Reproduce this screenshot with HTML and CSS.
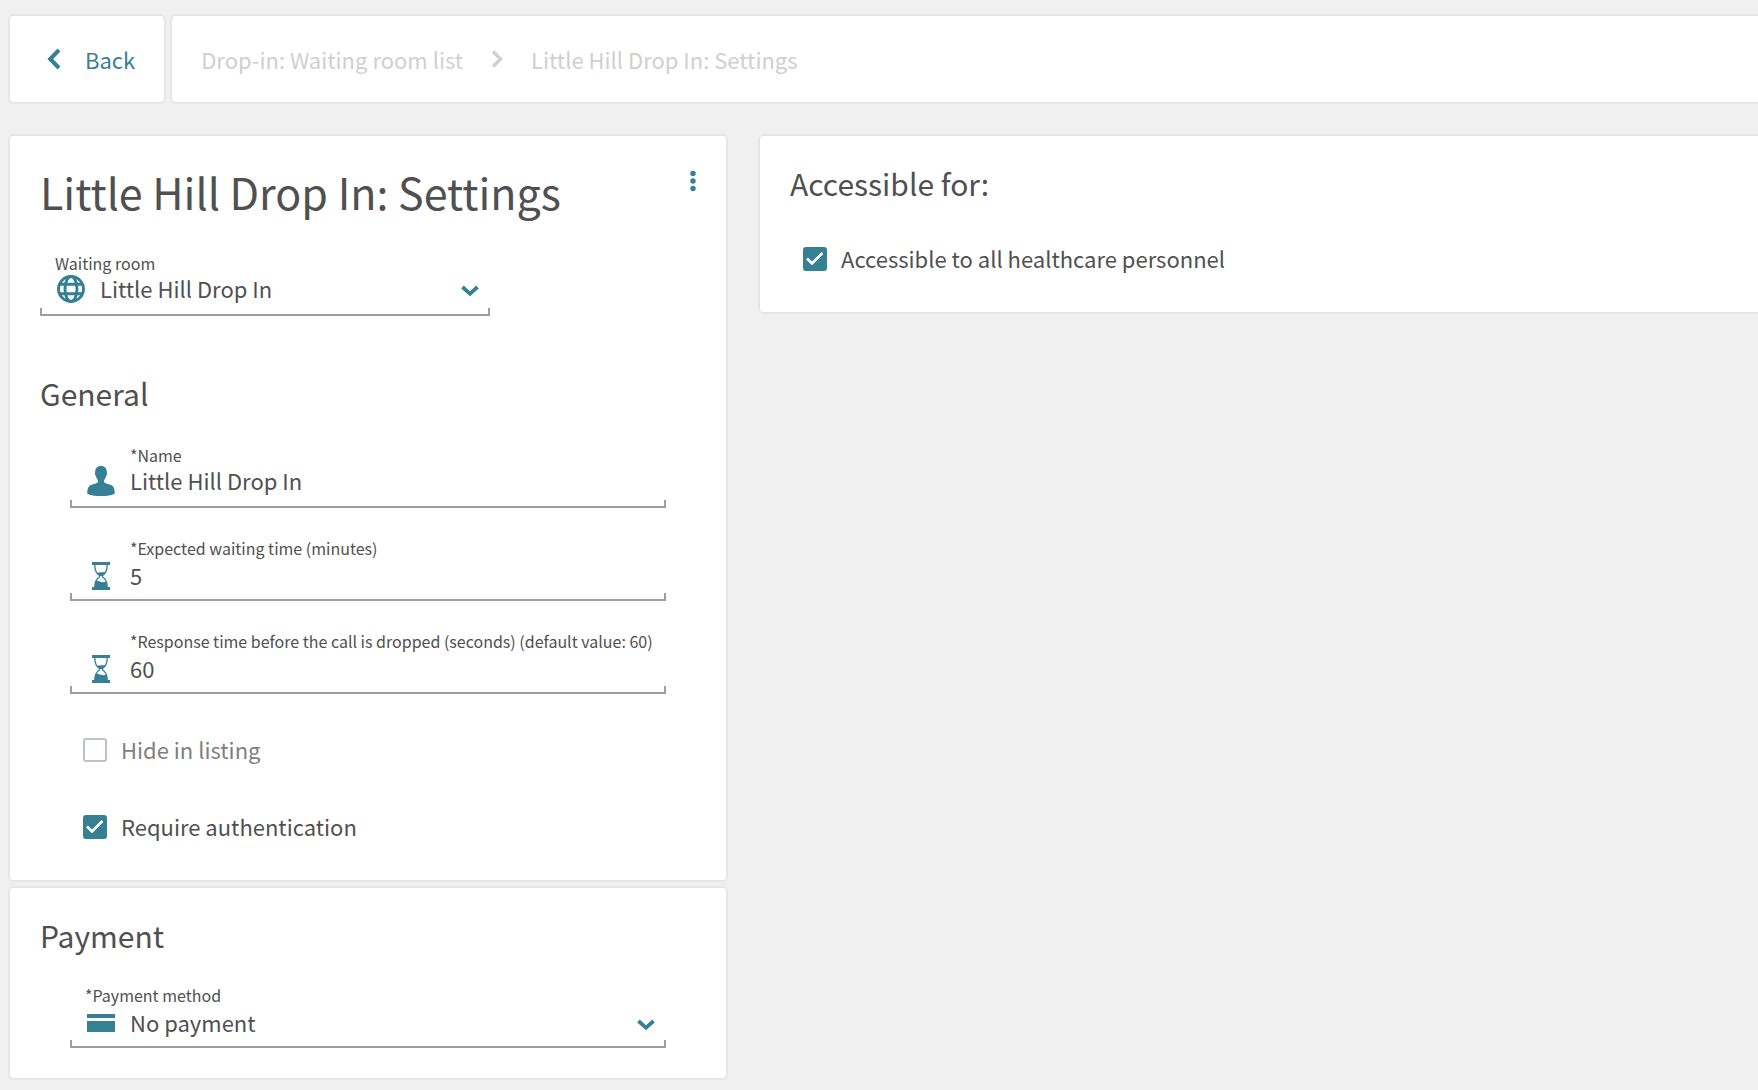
FILE: index.html
```html
<!DOCTYPE html>
<html lang="en">
<head>
  <meta charset="utf-8">
  <meta name="viewport" content="width=device-width, initial-scale=1">
  <title>Little Hill Drop In: Settings</title>
  <link rel="stylesheet" href="styles.css">
</head>
<body>
  <svg class="sprite" aria-hidden="true">
    <symbol id="chevron-down" viewBox="0 0 18 12">
      <path d="M1.5 2 9 8.800 16.500 2" fill="none" stroke="currentColor" stroke-width="3.800"/>
    </symbol>
    <symbol id="hourglass" viewBox="0 0 28 28">
      <path d="M5 0h18v3H5zM5 25h18v3H5z" fill="currentColor"/>
      <path d="M7.800 3c0 5.500 1.500 8.500 4.700 10.500v1.500C9.300 17 7.800 20 7.800 25M20.200 3c0 5.500-1.500 8.500-4.700 10.500v1.500c3.200 2 4.700 5 4.700 10" fill="none" stroke="currentColor" stroke-width="1.300"/>
      <path d="M9.500 10.800c1.500.5 3-.8 4.800-.6 1.500.2 2.700.2 4.300-.4-.8 1.800-2 3.200-3.400 4.200h-2.400c-1.400-.8-2.500-1.800-3.300-3.200zM8 25c0-2.500.2-4.300.8-6 1.800-.8 3.400.2 5 .8 2 .7 3.600.4 5.400 0 .6 1.500.8 3 .8 5.200z" fill="currentColor"/>
    </symbol>
  </svg>

  <header class="topbar">
    <button class="back" type="button">
      <svg class="back__icon" viewBox="0 0 14 22" aria-hidden="true"><path d="M12 2 3.200 11 12 20" fill="none" stroke="currentColor" stroke-width="4"/></svg>
      <span>Back</span>
    </button>
    <nav class="breadcrumbs" aria-label="Breadcrumb">
      <a href="#list">Drop-in: Waiting room list</a>
      <svg class="breadcrumbs__icon" viewBox="0 0 12 18" aria-hidden="true"><path d="M2 1.500 9.500 9 2 16.500" fill="none" stroke="currentColor" stroke-width="3.400"/></svg>
      <a href="#settings" aria-current="page">Little Hill Drop In: Settings</a>
    </nav>
  </header>

  <main class="layout">
    <form class="column">
      <section class="card card--options">
        <div class="card__header">
          <h1>Little Hill Drop In: Settings</h1>
          <button class="menu" type="button" aria-label="More options">
            <svg class="menu__icon" viewBox="0 0 6 22" aria-hidden="true" fill="currentColor"><circle cx="3" cy="3.500" r="2.700"/><circle cx="3" cy="11" r="2.700"/><circle cx="3" cy="18.500" r="2.700"/></svg>
          </button>
        </div>

        <div class="field field--room">
          <label class="field__label" for="room">Waiting room</label>
          <div class="field__row">
            <svg class="field__icon" viewBox="0 0 28 28" aria-hidden="true" fill="none" stroke="currentColor" stroke-width="2.900"><circle cx="14" cy="14" r="12.500"/><ellipse cx="14" cy="14" rx="6" ry="12.500"/><path d="M2.500 9.200h23M2.500 18.800h23"/></svg>
            <select class="field__control" id="room"><option>Little Hill Drop In</option></select>
            <svg class="field__chevron" aria-hidden="true"><use href="#chevron-down"/></svg>
          </div>
        </div>

        <h2 class="general-title">General</h2>
        <div class="fields">
          <div class="field field--inset">
            <label class="field__label" for="name">*Name</label>
            <div class="field__row">
              <svg class="field__icon" viewBox="0 0 28 30" aria-hidden="true" fill="currentColor"><path d="M14 0c3.900 0 6 2.600 5.800 6.500l.2.300c.4.800 0 2.500-.9 2.900-.3 1.900-1.100 3.300-2 4.300v2.200c1.700 1.800 6.200 1.800 8.400 3.600 1.700 1.700 2.300 4.600 2.300 7.600C25 29.300 20 30 14 30S3 29.300.2 27.400c0-3 .6-5.900 2.300-7.600 2.200-1.800 6.700-1.800 8.400-3.600V14c-.9-1-1.700-2.400-2-4.300-.9-.4-1.300-2.100-.9-2.900l.2-.3C8 2.600 10.100 0 14 0z"/></svg>
              <input class="field__control" id="name" type="text" value="Little Hill Drop In">
            </div>
          </div>
          <div class="field field--inset field--low">
            <label class="field__label" for="wait">*Expected waiting time (minutes)</label>
            <div class="field__row">
              <svg class="field__icon" aria-hidden="true"><use href="#hourglass"/></svg>
              <input class="field__control" id="wait" type="text" inputmode="numeric" value="5">
            </div>
          </div>
          <div class="field field--inset field--low">
            <label class="field__label" for="response">*Response time before the call is dropped (seconds) (default value: 60)</label>
            <div class="field__row">
              <svg class="field__icon" aria-hidden="true"><use href="#hourglass"/></svg>
              <input class="field__control" id="response" type="text" inputmode="numeric" value="60">
            </div>
          </div>
        </div>

        <div class="checks checks--inset">
          <label class="check check--muted"><input type="checkbox"><span>Hide in listing</span></label>
          <label class="check"><input type="checkbox" checked><span>Require authentication</span></label>
        </div>
      </section>

      <section class="card">
        <h2>Payment</h2>
        <div class="field field--payment field--low">
          <label class="field__label" for="payment">*Payment method</label>
          <div class="field__row">
            <svg class="field__icon" viewBox="0 0 28 18" aria-hidden="true" fill="currentColor"><path d="M0 0h28v4H0zM0 7h28v11H0z"/></svg>
            <select class="field__control" id="payment"><option>No payment</option></select>
            <svg class="field__chevron" aria-hidden="true"><use href="#chevron-down"/></svg>
          </div>
        </div>
      </section>
    </form>

    <section class="card card--options card--bleed">
      <h2>Accessible for:</h2>
      <div class="checks">
        <label class="check"><input type="checkbox" checked><span>Accessible to all healthcare personnel</span></label>
      </div>
    </section>
  </main>
</body>
</html>
```

FILE: styles.css
```css
:root {
  --teal: #358093;
  --text: #505050;
  --edge: #e5e5e5;
  --line: #9e9e9e;
  --crumb: #cfcfcf;
}

* {
  box-sizing: border-box;
}

body {
  margin: 0;
  padding: 14px 0 10px 8px;
  background: #f0f0f0;
  color: var(--text);
  font: 22px/32px "Noto Sans CJK SC", "Noto Sans", sans-serif;
}

button,
input,
select {
  margin: 0;
  padding: 0;
  border: 0;
  background: none;
  color: inherit;
  font: inherit;
}

h1,
h2 {
  margin: 0;
  font-weight: 400;
}

h1 {
  font-size: 43px;
  line-height: 56px;
}

h2 {
  font-size: 30px;
  line-height: 40px;
}

svg {
  flex: none;
}

.sprite {
  position: absolute;
  width: 0;
  height: 0;
}

/* Top bar */

.topbar {
  display: flex;
  gap: 4px;
  margin-bottom: 30px;
}

.back,
.breadcrumbs {
  display: flex;
  align-items: center;
  min-height: 90px;
  border: 2px solid var(--edge);
  border-radius: 6px;
  background: #fff;
}

.back {
  gap: 24px;
  padding: 0 29px 0 37px;
  color: var(--teal);
  cursor: pointer;
}

.back__icon {
  width: 14px;
  height: 22px;
}

.breadcrumbs {
  flex: 1;
  gap: 28px;
  padding: 0 29px;
  border-right: 0;
  border-radius: 6px 0 0 6px;
  color: var(--crumb);
}

.breadcrumbs a {
  color: inherit;
  text-decoration: none;
}

.breadcrumbs__icon {
  width: 12px;
  height: 18px;
}

/* Cards */

.layout {
  display: grid;
  grid-template-columns: minmax(0, 720px) minmax(0, 1fr);
  align-items: start;
  gap: 30px;
}

.column {
  display: grid;
  gap: 4px;
}

.card {
  padding: 27px 30px 30px;
  border: 2px solid var(--edge);
  border-radius: 6px;
  background: #fff;
}

.card--options {
  padding-bottom: 38px;
}

.card--bleed {
  border-right: 0;
  border-radius: 6px 0 0 6px;
}

.card__header {
  display: flex;
  align-items: flex-start;
  justify-content: space-between;
}

.menu {
  display: flex;
  justify-content: center;
  align-items: center;
  width: 36px;
  height: 36px;
  margin-right: -15px;
  color: var(--teal);
  cursor: pointer;
}

.menu__icon {
  width: 6px;
  height: 22px;
}

.general-title {
  margin-top: 57px;
}

/* Fields */

.fields {
  display: grid;
  gap: 28px;
  margin-top: 30px;
}

.field {
  padding: 0 11px 15px 15px;
  background:
    linear-gradient(var(--line), var(--line)) left bottom / 2px 8px no-repeat,
    linear-gradient(var(--line), var(--line)) right bottom / 2px 8px no-repeat,
    linear-gradient(var(--line), var(--line)) left bottom / 100% 2px no-repeat;
}

.field--room {
  max-width: 450px;
  margin-top: 32px;
}

.field--inset,
.field--payment {
  margin-inline: 30px;
}

.field--payment {
  margin-top: 28px;
}

.field--low {
  padding-bottom: 11px;
}

.field__label {
  display: block;
  font-size: 16px;
  line-height: 24px;
}

.field--inset .field__label {
  padding-left: 45px;
}

.field__row {
  display: flex;
  align-items: center;
  gap: 15px;
  height: 26px;
  padding-left: 2px;
}

.field--low .field__row {
  height: 30px;
}

.field__icon {
  width: 28px;
  height: 30px;
  margin-top: 2px;
  color: var(--teal);
}

.field__control {
  flex: 1;
  min-width: 0;
  height: 32px;
  outline: 0;
  appearance: none;
}

.field__chevron {
  width: 18px;
  height: 12px;
  margin-top: 6px;
  color: var(--teal);
}

/* Checkboxes */

.checks {
  display: grid;
  justify-items: start;
  gap: 45px;
  margin-top: 39px;
  padding-left: 13px;
}

.checks--inset {
  margin-left: 30px;
}

.check {
  display: flex;
  align-items: center;
  gap: 14px;
}

.check--muted {
  color: #808080;
}

.check input {
  flex: none;
  width: 24px;
  height: 24px;
  margin-top: 2px;
  border: 2px solid #b9c3ca;
  border-radius: 3px;
  appearance: none;
}

.check input:checked {
  border-color: var(--teal);
  background: var(--teal) url("data:image/svg+xml,%3Csvg xmlns='http://www.w3.org/2000/svg' viewBox='0 0 20 20'%3E%3Cpath d='M2 9.500l5 5L17.500 4' fill='none' stroke='%23fff' stroke-width='2.600'/%3E%3C/svg%3E") center / 20px 20px no-repeat;
}
```
